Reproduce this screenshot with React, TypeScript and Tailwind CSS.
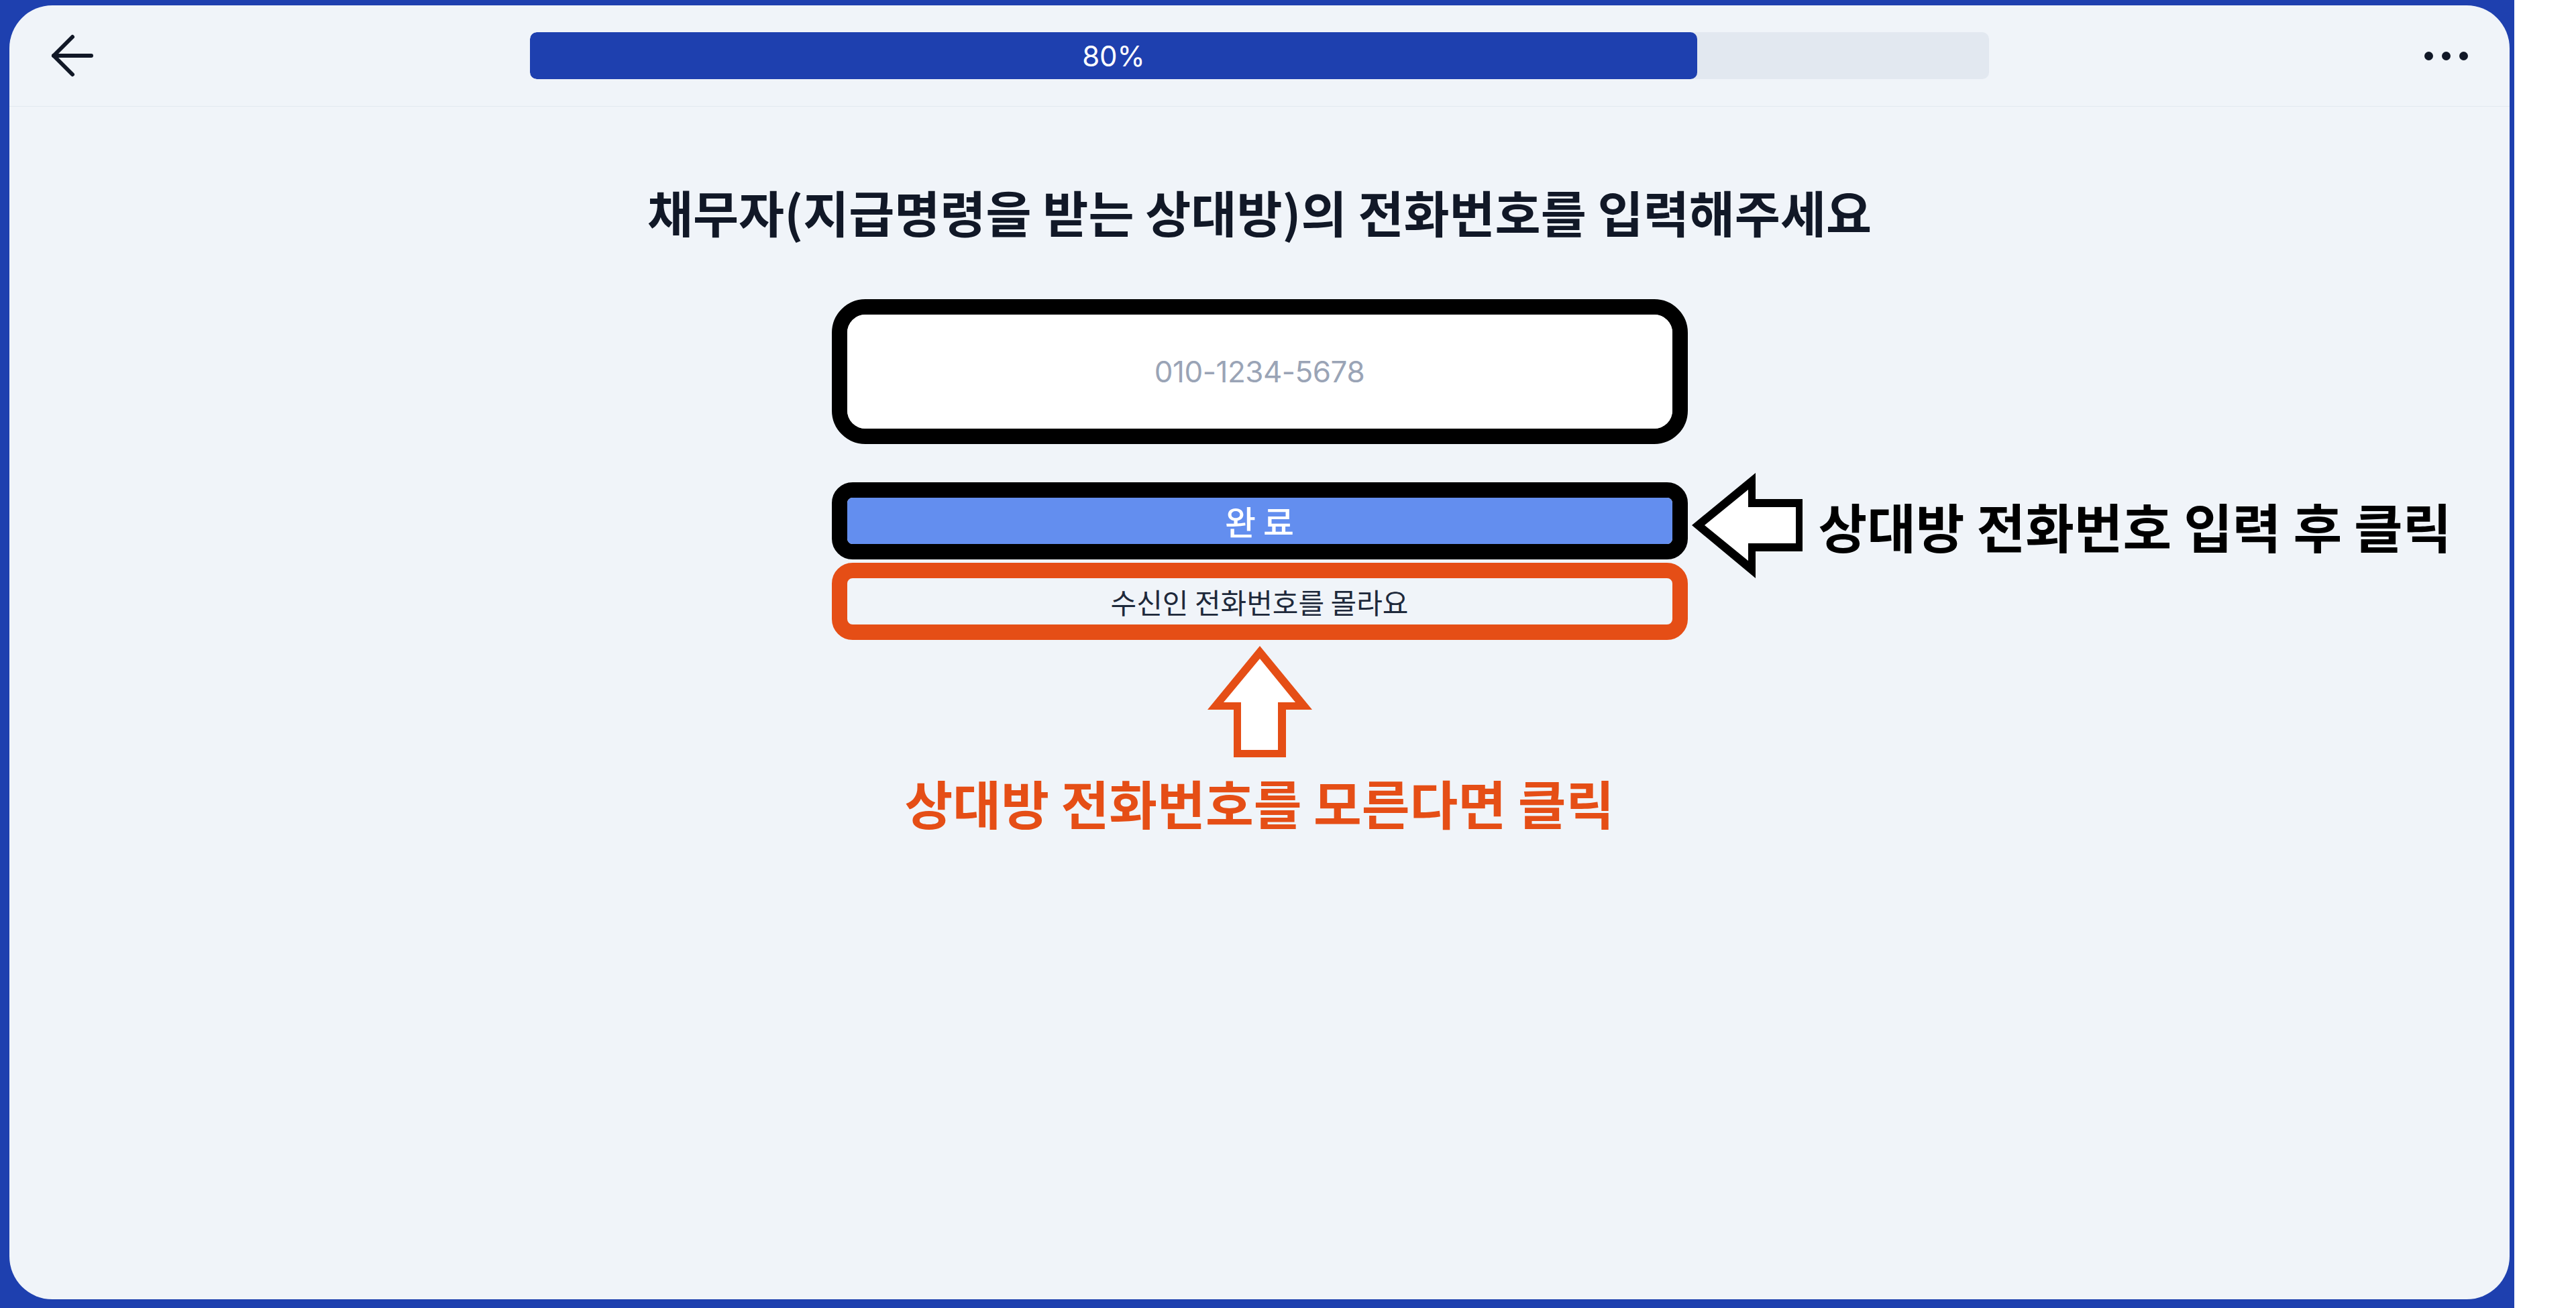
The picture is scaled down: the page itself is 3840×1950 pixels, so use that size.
import { ArrowLeft } from 'lucide-react';

const kr = "font-['Noto_Sans_CJK_KR','Noto_Sans',sans-serif]";
const progress = 80;

function LeftPointer() {
  return (
    <svg width="165" height="157" viewBox="0 0 165 157" className="shrink-0">
      <polygon points="0,78 95,0 95,39 165,39 165,117 95,117 95,157" fill="#000" />
      <polygon points="19,78 84,25 84,51 155,51 155,105 84,105 84,131" fill="#fff" />
    </svg>
  );
}

function UpPointer() {
  return (
    <svg width="156" height="166" viewBox="0 0 156 166" className="mt-[9px] shrink-0">
      <polygon points="78,0 156,95 117,95 117,166 39,166 39,95 0,95" fill="#e54e16" />
      <polygon points="78,19 131,84 105,84 105,155 50,155 50,84 24,84" fill="#fff" />
    </svg>
  );
}

export default function App() {
  return (
    <div className="min-h-[1950px] w-[3840px] bg-white">
      <div className="h-[1950px] w-[3748px] bg-[#1e40af] pb-[13px] pl-[14px] pr-[7px] pt-[8px]">
        <div className="flex h-full flex-col rounded-[64px] bg-[#f0f4f9]">
          <header className="flex h-[151px] shrink-0 items-center justify-between border-b border-[#e2e8f0] px-[50px]">
            <div className="flex w-[200px] items-center">
              <ArrowLeft className="-ml-[4px] h-[96px] w-[96px] text-[#111827]" strokeWidth={1.5} />
            </div>
            <div className="h-[70px] w-[2175px] overflow-hidden rounded-[10px] bg-[#e2e8f0]">
              <div
                className="flex h-full items-center justify-center rounded-[10px] bg-[#1e40af] font-['Inter',sans-serif] text-[42px] text-white"
                style={{ width: `${progress}%` }}
              >
                {progress}%
              </div>
            </div>
            <div className="flex w-[200px] items-center justify-end gap-[13px] pr-[12px]">
              <span className="h-[13px] w-[13px] rounded-full bg-[#111827]" />
              <span className="h-[13px] w-[13px] rounded-full bg-[#111827]" />
              <span className="h-[13px] w-[13px] rounded-full bg-[#111827]" />
            </div>
          </header>

          <main className="flex flex-1 flex-col items-center">
            <h1 className={`${kr} mt-[111px] text-[74px] font-bold leading-[89px] text-[#111827]`}>
              채무자(지급명령을 받는 상대방)의 전화번호를 입력해주세요
            </h1>

            <div className="mt-[87px] w-[1276px] rounded-[50px] border-[23px] border-black bg-white">
              <input
                type="tel"
                placeholder="010-1234-5678"
                className="block h-[170px] w-full rounded-[27px] bg-white text-center font-['Inter',sans-serif] text-[44px] tracking-[-0.5px] text-[#111827] outline-none placeholder:text-[#9aa4b6]"
              />
            </div>

            <div className="relative mt-[57px] w-[1276px]">
              <div className="rounded-[31px] border-[23px] border-black">
                <button
                  type="button"
                  className={`${kr} flex h-[69px] w-full items-center justify-center rounded-[8px] bg-[#638eef] text-[50px] font-medium text-white`}
                >
                  완 료
                </button>
              </div>
              <div className="absolute left-[calc(100%+6px)] top-[-14px] flex items-center gap-[24px] whitespace-nowrap">
                <LeftPointer />
                <span className={`${kr} text-[79px] font-bold leading-[95px] text-black`}>
                  상대방 전화번호 입력 후 클릭
                </span>
              </div>
            </div>

            <div className="mt-[5px] w-[1276px] rounded-[31px] border-[23px] border-[#e54e16]">
              <button
                type="button"
                className={`${kr} flex h-[69px] w-full items-center justify-center rounded-[8px] text-[42px] text-[#1e293b]`}
              >
                수신인 전화번호를 몰라요
              </button>
            </div>

            <UpPointer />

            <p className={`${kr} mt-[20px] text-[78px] font-bold leading-[94px] text-[#e54e16]`}>
              상대방 전화번호를 모른다면 클릭
            </p>
          </main>
        </div>
      </div>
    </div>
  );
}
